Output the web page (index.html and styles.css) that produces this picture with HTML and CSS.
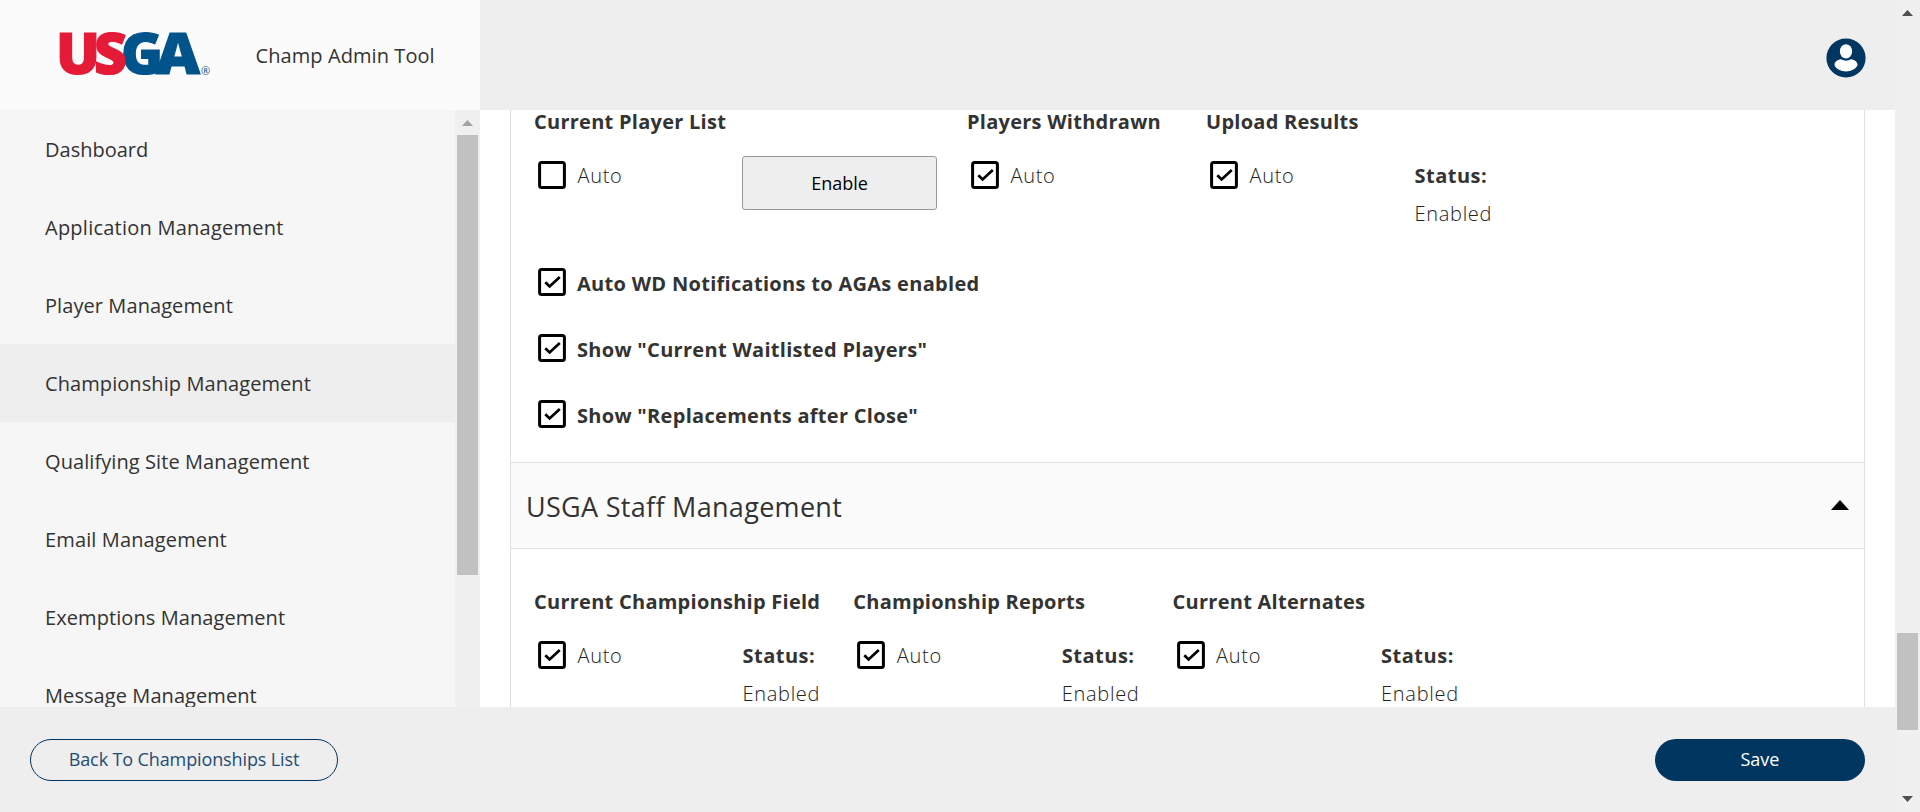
FILE: index.html
```html
<!DOCTYPE html>
<html lang="en">
<head>
<meta charset="utf-8">
<title>Champ Admin Tool</title>
<link rel="stylesheet" href="styles.css">
</head>
<body>
<svg class="defs" width="0" height="0">
  <symbol id="box-on" viewBox="0 0 28 28"><rect x="1.6" y="1.6" width="24.8" height="24.8" rx="2" fill="none" stroke="#000" stroke-width="3"/><path d="M7.3 14.3l4.300 4.200 10.200-9.600" fill="none" stroke="#000" stroke-width="2.7"/></symbol>
  <symbol id="box-off" viewBox="0 0 28 28"><rect x="1.6" y="1.6" width="24.8" height="24.8" rx="2" fill="none" stroke="#000" stroke-width="3"/></symbol>
</svg>
<div class="app">
  <div class="page">
    <header class="top">
      <div class="brand">
        <svg class="logo" viewBox="0 0 152 44" width="152" height="44" aria-label="USGA">
          <g class="logo-text">
            <text class="blue" x="61" y="41.200" textLength="42" lengthAdjust="spacingAndGlyphs">G</text>
            <text class="blue" x="96" y="41.200" textLength="44" lengthAdjust="spacingAndGlyphs">A</text>
            <text class="red" x="-4" y="41.200" textLength="44" lengthAdjust="spacingAndGlyphs">U</text>
            <text class="red" x="34" y="41.200" textLength="33" lengthAdjust="spacingAndGlyphs">S</text>
          </g>
          <text class="reg" x="141" y="42">®</text>
        </svg>
        <span class="product">Champ Admin Tool</span>
      </div>
      <svg class="user" viewBox="0 0 40 40" width="40" height="40"><circle cx="20" cy="20" r="19.6" fill="#003660"/><ellipse cx="20" cy="13.4" rx="6.1" ry="7.2" fill="#fff"/><path d="M15 21.3q5 2.900 10 0c4 .6 6.500 2.900 6.500 5.300 0 3-5 6.800-11.500 6.800S8.500 29.600 8.500 26.600c0-2.400 2.500-4.700 6.500-5.300z" fill="#fff"/></svg>
    </header>
    <div class="middle">
      <div class="side">
        <nav class="nav">
          <a class="n1">Dashboard</a>
          <a class="n2">Application Management</a>
          <a class="n3">Player Management</a>
          <a class="n4 active">Championship Management</a>
          <a class="n5">Qualifying Site Management</a>
          <a class="n6">Email Management</a>
          <a class="n7">Exemptions Management</a>
          <a class="n8">Message Management</a>
        </nav>
        <div class="bar side-bar"><i class="arrow up"></i><div class="thumb"></div></div>
      </div>
      <main class="main">
        <div class="panel">
          <section class="group">
            <div class="cols players">
              <div class="col">
                <h3>Current Player List</h3>
                <div class="row"><label class="auto"><svg class="box"><use href="#box-off"/></svg>Auto</label><button class="enable">Enable</button></div>
              </div>
              <div class="col">
                <h3>Players Withdrawn</h3>
                <div class="row"><label class="auto"><svg class="box"><use href="#box-on"/></svg>Auto</label></div>
              </div>
              <div class="col">
                <h3>Upload Results</h3>
                <div class="row"><label class="auto"><svg class="box"><use href="#box-on"/></svg>Auto</label><div class="status"><b>Status:</b><span>Enabled</span></div></div>
              </div>
            </div>
            <label class="opt"><svg class="box"><use href="#box-on"/></svg>Auto WD Notifications to AGAs enabled</label>
            <label class="opt"><svg class="box"><use href="#box-on"/></svg>Show "Current Waitlisted Players"</label>
            <label class="opt"><svg class="box"><use href="#box-on"/></svg>Show "Replacements after Close"</label>
          </section>
          <div class="section-head"><h2>USGA Staff Management</h2><svg width="18" height="10" viewBox="0 0 18 10"><path d="M9 0l9 10H0z"/></svg></div>
          <section class="group staff">
            <div class="cols">
              <div class="col">
                <h3>Current Championship Field</h3>
                <div class="row"><label class="auto"><svg class="box"><use href="#box-on"/></svg>Auto</label><div class="status"><b>Status:</b><span>Enabled</span></div></div>
              </div>
              <div class="col">
                <h3>Championship Reports</h3>
                <div class="row"><label class="auto"><svg class="box"><use href="#box-on"/></svg>Auto</label><div class="status"><b>Status:</b><span>Enabled</span></div></div>
              </div>
              <div class="col">
                <h3>Current Alternates</h3>
                <div class="row"><label class="auto"><svg class="box"><use href="#box-on"/></svg>Auto</label><div class="status"><b>Status:</b><span>Enabled</span></div></div>
              </div>
            </div>
          </section>
        </div>
      </main>
    </div>
    <footer class="bottom"><button class="back">Back To Championships List</button><button class="save">Save</button></footer>
  </div>
  <div class="bar page-bar"><i class="arrow up"></i><div class="thumb"></div><i class="arrow down"></i></div>
</div>
</body>
</html>
```
FILE: styles.css
```css
* { box-sizing: border-box; }
body { margin: 0; font-family: "Open Sans", "Noto Sans", sans-serif; font-size: 20px; color: #333; overflow: hidden; }
h2, h3 { margin: 0; }
.defs { display: block; }
.app { display: flex; height: 812px; }
.page { flex: 1; display: flex; flex-direction: column; min-width: 0; }

.top { height: 110px; background: #eee; display: flex; justify-content: space-between; }
.brand { width: 480px; background: #fbfbfb; display: flex; align-items: center; padding-left: 60px; gap: 43.500px; }
.logo { display: block; overflow: visible; }
.logo-text { font-weight: 800; font-size: 56px; }
.red { fill: #e51a37; stroke: #e51a37; stroke-width: 1.2; }
.blue { fill: #00538b; stroke: #00538b; stroke-width: 1.2; }
.reg { fill: #00538b; font-size: 11px; }
.product { white-space: nowrap; letter-spacing: 0.08px; }
.user { margin: 38px 29.500px 0 0; }

.middle { height: 597px; display: flex; }
.side { width: 480px; background: #f6f6f6; display: flex; overflow: hidden; }
.nav { flex: 1; }
.nav a { display: flex; align-items: center; height: 78px; padding: 0 0 0 45px; white-space: nowrap; letter-spacing: 0.08px; }
.nav .n1 { letter-spacing: 0; }
.nav .n2 { letter-spacing: 0.24px; }
.nav .n6 { letter-spacing: 0.13px; }
.nav .active { background: #eee; }

.bar { width: 25px; background: #f0f0f0; display: flex; flex-direction: column; align-items: center; flex-shrink: 0; }
.thumb { width: 21px; background: #c1c1c1; }
.arrow { width: 11px; height: 6px; background: #505050; }
.up { margin-top: 10px; clip-path: polygon(50% 0, 100% 100%, 0 100%); }
.down { margin-top: 66px; clip-path: polygon(0 0, 100% 0, 50% 100%); }
.side-bar .arrow { background: #a3a3a3; }
.side-bar .thumb { margin-top: 9px; height: 440px; }
.page-bar .thumb { margin-top: 617px; height: 97px; }

.main { flex: 1; background: #fff; padding: 0 30px; overflow: hidden; }
.panel { border: solid #e0e0e0; border-width: 0 1px; height: 597px; overflow: hidden; }
.group { padding-left: 23px; height: 352px; }
.cols { display: grid; grid-template-columns: 433px 239px 400px; height: 158px; }
.staff { padding-top: 41px; }
.staff .cols { grid-template-columns: 319.300px 319.300px 400px; }
.col { white-space: nowrap; }
h3 { font-size: 20px; font-weight: 700; line-height: 26px; margin-top: -1px; height: 47px; letter-spacing: 0.26px; }
.row { display: flex; }
.auto { width: 208px; height: 38px; display: flex; padding-left: 4px; gap: 11.500px; color: #222; font-weight: 300; line-height: 40px; letter-spacing: 0.7px; }
.box { width: 28px; height: 28px; margin-top: 5px; flex-shrink: 0; }
.status { display: flex; flex-direction: column; line-height: 38px; color: #222; font-weight: 300; padding: 1px 0 0 0.500px; letter-spacing: 0.7px; }
.status b { color: #333; font-weight: 700; letter-spacing: 0.500px; }
.enable { width: 195px; height: 54px; border: 1px solid #999; border-radius: 3px; background: #eee; font: 400 18px "Open Sans", sans-serif; color: #000; }
.opt { display: flex; padding-left: 4px; gap: 11px; height: 66px; font-weight: 700; line-height: 31px; white-space: nowrap; letter-spacing: 0.3px; }
.opt .box { margin-top: 0; }

.section-head { height: 87px; border: solid #e0e0e0; border-width: 1px 0; background: #fbfbfb; display: flex; align-items: center; justify-content: space-between; padding: 0 15px; }
.section-head svg { margin-bottom: 2px; }
h2 { font-size: 27px; font-weight: 400; padding-top: 1px; letter-spacing: 0.3px; }

.bottom { height: 105px; background: #eee; display: flex; justify-content: space-between; padding: 32px 30px 0; }
.back, .save { height: 42px; border-radius: 21px; font: 400 18px "Open Sans", sans-serif; white-space: nowrap; padding-bottom: 3px; }
.back { width: 308px; border: 1px solid #003660; background: none; color: #1f4d73; letter-spacing: -0.12px; }
.save { width: 210px; border: 0; background: #003660; color: #fff; font-weight: 500; }
```
